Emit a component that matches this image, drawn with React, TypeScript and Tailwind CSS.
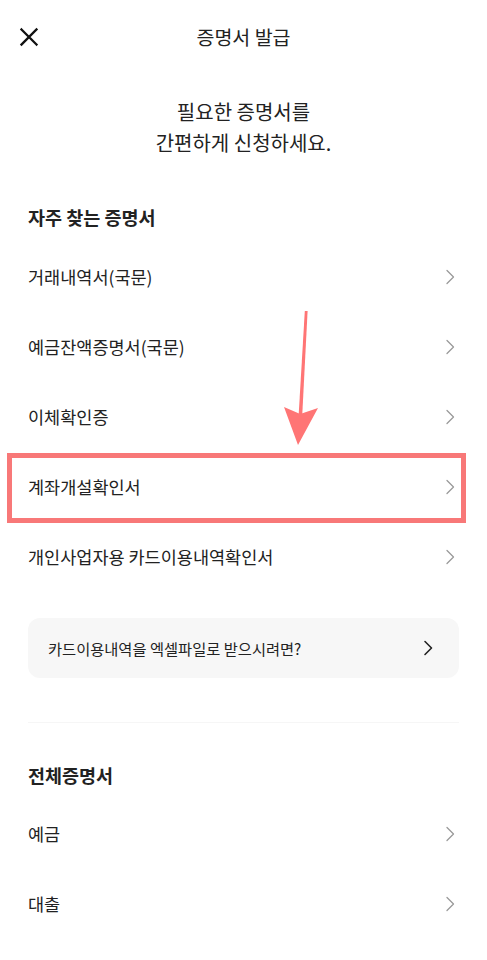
import React from "react";

const font = { fontFamily: '"Noto Sans CJK KR", "Noto Sans", sans-serif' };

function Chevron({ dark = false }: { dark?: boolean }) {
  return (
    <svg width="10" height="16" viewBox="0 0 10 16" fill="none">
      <polyline
        points="2,1.5 8.5,8 2,14.5"
        stroke={dark ? "#222222" : "#9a9a9a"}
        strokeWidth={dark ? 1.6 : 1.3}
        strokeLinecap="round"
        strokeLinejoin="round"
      />
    </svg>
  );
}

function Row({ label, highlight = false }: { label: string; highlight?: boolean }) {
  return (
    <div className="relative flex h-[70px] items-center justify-between pl-[28px] pr-[32px]">
      <span className="text-[17.5px] text-[#222222]">{label}</span>
      <Chevron />
      {highlight && (
        <div className="pointer-events-none absolute left-[7px] right-[21px] top-[1px] bottom-[-1px] border-[5px] border-[#f87878]" />
      )}
    </div>
  );
}

export default function App() {
  return (
    <div className="relative min-h-[960px] w-full bg-white" style={font}>
      <div className="relative flex h-[74px] items-center justify-center">
        <div className="absolute left-[19px] top-[27px]">
          <svg width="20" height="20" viewBox="0 0 20 20" fill="none">
            <path d="M2.5 2.5 L17.5 17.5 M17.5 2.5 L2.5 17.5" stroke="#111" strokeWidth="2.3" strokeLinecap="square" />
          </svg>
        </div>
        <span className="text-[19.5px] text-[#222222]">증명서 발급</span>
      </div>

      <div className="mt-[22px] text-center text-[20px] leading-[31px] text-[#222222]">
        <div>필요한 증명서를</div>
        <div>간편하게 신청하세요.</div>
      </div>

      <div className="mt-[45px] px-[28px] text-[18.5px] font-bold leading-[28px] text-[#222222]">자주 찾는 증명서</div>

      <div className="mt-[11px]">
        <Row label="거래내역서(국문)" />
        <Row label="예금잔액증명서(국문)" />
        <Row label="이체확인증" />
        <Row label="계좌개설확인서" highlight />
        <Row label="개인사업자용 카드이용내역확인서" />
      </div>

      <div className="mx-[28px] mt-[26px] flex h-[60px] items-center justify-between rounded-[12px] bg-[#f7f7f7] pl-[20px] pr-[26px]">
        <span className="text-[15.3px] text-[#222222]">카드이용내역을 엑셀파일로 받으시려면?</span>
        <Chevron dark />
      </div>

      <div className="mx-[28px] mt-[44px] h-px bg-[#f6f6f6]" />

      <div className="mt-[38px] px-[28px] text-[18.5px] font-bold leading-[28px] text-[#222222]">전체증명서</div>

      <div className="mt-[10px]">
        <Row label="예금" />
        <Row label="대출" />
      </div>

      <svg
        className="pointer-events-none absolute left-[280px] top-[305px]"
        width="45"
        height="145"
        viewBox="280 305 45 145"
      >
        <polygon points="304.8,311 307.6,311 302.2,416 298.6,416" fill="#ff7575" />
        <polygon points="284,407 300.2,414 318,408 298,445" fill="#ff7575" />
      </svg>
    </div>
  );
}
